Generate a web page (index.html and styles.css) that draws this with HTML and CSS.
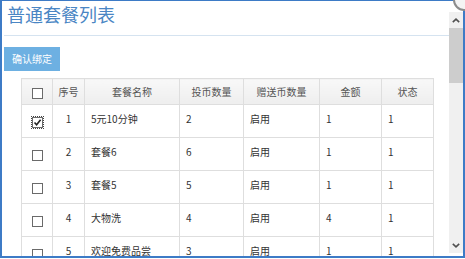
FILE: index.html
```html
<!DOCTYPE html>
<html lang="zh">
<head>
<meta charset="utf-8">
<title>普通套餐列表</title>
<link rel="stylesheet" href="styles.css">
</head>
<body>
<div class="window">
  <div class="content">
    <h1 class="title">普通套餐列表</h1>
    <button class="btn">确认绑定</button>
    <table class="grid">
      <colgroup>
        <col class="c-chk"><col class="c-no"><col class="c-name"><col class="c-coin"><col class="c-gift"><col class="c-amt"><col class="c-st">
      </colgroup>
      <thead>
        <tr>
          <th><span class="cb"></span></th>
          <th>序号</th>
          <th>套餐名称</th>
          <th>投币数量</th>
          <th>赠送币数量</th>
          <th>金额</th>
          <th>状态</th>
        </tr>
      </thead>
      <tbody>
        <tr>
          <td class="chk"><span class="cb checked"><svg viewBox="0 0 9 9" width="9" height="9"><path d="M1.5 4.5 L3.6 6.8 L7.6 1.8" fill="none" stroke="#222" stroke-width="1.6"/></svg></span></td>
          <td class="no">1</td><td>5元10分钟</td><td>2</td><td>启用</td><td>1</td><td>1</td>
        </tr>
        <tr>
          <td class="chk"><span class="cb"></span></td>
          <td class="no">2</td><td>套餐6</td><td>6</td><td>启用</td><td>1</td><td>1</td>
        </tr>
        <tr>
          <td class="chk"><span class="cb"></span></td>
          <td class="no">3</td><td>套餐5</td><td>5</td><td>启用</td><td>1</td><td>1</td>
        </tr>
        <tr>
          <td class="chk"><span class="cb"></span></td>
          <td class="no">4</td><td>大物洗</td><td>4</td><td>启用</td><td>4</td><td>1</td>
        </tr>
        <tr>
          <td class="chk"><span class="cb"></span></td>
          <td class="no">5</td><td>欢迎免费品尝</td><td>3</td><td>启用</td><td>1</td><td>1</td>
        </tr>
      </tbody>
    </table>
  </div>
  <div class="scrollbar">
    <div class="sb-btn"><svg viewBox="0 0 8 5" width="8" height="5"><path d="M0.8 4.2 L4 1.2 L7.2 4.2" fill="none" stroke="#505050" stroke-width="1.6"/></svg></div>
    <div class="sb-thumb"></div>
    <div class="sb-track"></div>
    <div class="sb-btn"><svg viewBox="0 0 8 5" width="8" height="5"><path d="M0.8 0.8 L4 3.8 L7.2 0.8" fill="none" stroke="#505050" stroke-width="1.6"/></svg></div>
  </div>
  <span class="close"></span>
</div>
</body>
</html>
```
FILE: styles.css
```css
html, body {
  margin: 0;
  padding: 0;
  background: #fff;
}
body {
  width: 465px;
  height: 259px;
  overflow: hidden;
  font-family: "Noto Sans CJK SC", "Noto Sans", sans-serif;
}
.window {
  position: relative;
  box-sizing: border-box;
  width: 465px;
  height: 258px;
  border-top: 1px solid #3d7bc6;
  border-left: 2px solid #3d7bc6;
  border-right: 2px solid #3d7bc6;
  border-bottom: 2px solid #3d7bc6;
  display: flex;
  background: #fff;
}
.content {
  flex: 1;
  min-width: 0;
  padding-left: 2px;
  overflow: hidden;
}
.title {
  margin: 0;
  padding: 1px 0 9px 3px;
  font-size: 18px;
  line-height: 24px;
  font-weight: normal;
  color: #4a86c4;
  border-bottom: 1px solid #d5e3f0;
}
.btn {
  display: block;
  margin: 11px 0 0 0;
  width: 56px;
  height: 24px;
  padding: 0;
  border: 0;
  background: #6db0e2;
  color: #fff;
  font-family: inherit;
  font-size: 10px;
  line-height: 24px;
  text-align: center;
}
.grid {
  margin: 7px 0 0 17px;
  border-collapse: collapse;
  table-layout: fixed;
  width: 412px;
  font-size: 10px;
  color: #333;
}
.c-chk { width: 31px; }
.c-no { width: 32px; }
.c-name { width: 95px; }
.c-coin { width: 64px; }
.c-gift { width: 76px; }
.c-amt { width: 62px; }
.c-st { width: 52px; }
.grid th, .grid td {
  border: 1px solid #dedede;
  padding: 0;
  white-space: nowrap;
  overflow: hidden;
}
.grid th {
  height: 25px;
  font-weight: normal;
  color: #555;
  text-align: center;
  background: linear-gradient(#f8f8f8, #eeeeee);
}
.grid td {
  height: 26px;
  padding: 0 0 6px 6px;
  text-align: left;
  vertical-align: middle;
}
.grid td.chk {
  padding: 0;
  text-align: center;
}
.grid td.no {
  padding-left: 0;
  text-align: center;
}
.cb {
  display: inline-block;
  box-sizing: border-box;
  width: 11px;
  height: 11px;
  border: 1px solid #6a6a6a;
  background: #fff;
  vertical-align: middle;
  position: relative;
}
.cb.checked {
  outline: 1px dotted #444;
  outline-offset: 0;
}
.cb svg {
  display: block;
  margin: 0 0 0 0;
}
.scrollbar {
  width: 14px;
  margin: 11px 0 3px 0;
  background: #f0f0f0;
  display: flex;
  flex-direction: column;
}
.sb-btn {
  height: 16px;
  display: flex;
  align-items: center;
  justify-content: center;
}
.sb-thumb {
  height: 55px;
  background: #cdcdcd;
}
.sb-track {
  flex: 1;
}
.close {
  position: absolute;
  top: -12px;
  right: -12px;
  width: 18px;
  height: 18px;
  border-radius: 50%;
  border: 2px solid #8c8c8c;
  background: #f4f4f4;
}
```
